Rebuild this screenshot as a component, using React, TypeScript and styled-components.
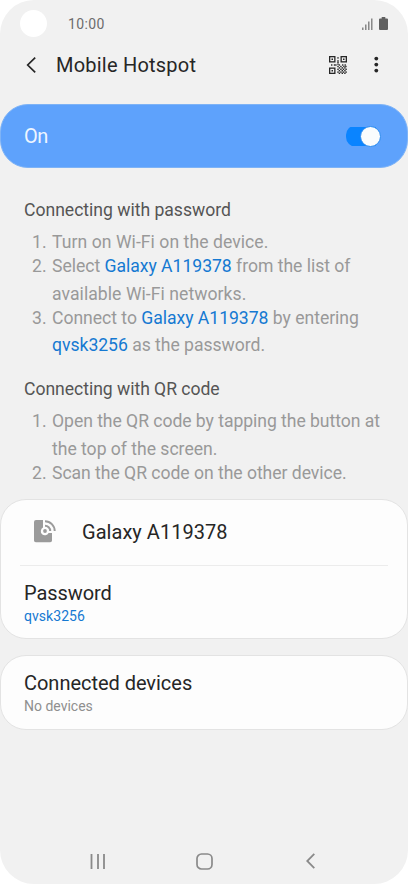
import React from 'react';
import styled, { createGlobalStyle } from 'styled-components';

const Global = createGlobalStyle`
  * { box-sizing: border-box; }
  body { margin: 0; background: #fff; font-family: Roboto, "Liberation Sans", sans-serif; }
`;
const Screen = styled.main`
  width: 408px; height: 884px; border-radius: 34px; background: #f1f1f1;
  display: flex; flex-direction: column; overflow: hidden;
`;
const StatusBar = styled.header`
  height: 47px; display: flex; align-items: center; padding: 0 20px 0 20px; flex: none;
`;
const Camera = styled.span`width: 27px; height: 27px; border-radius: 50%; background: #fff;`;
const Clock = styled.time`
  margin-left: 21px; margin-right: auto; font-size: 14px; line-height: 20px; letter-spacing: 0.4px; color: #6c6c6c;
`;
const StatusIcons = styled.div`display: flex; gap: 6px; align-items: center;`;
const TitleBar = styled.div`
  height: 36px; display: flex; align-items: center; padding: 0 23px 0 24px; flex: none;
`;
const Title = styled.h1<{ $track: number }>`
  margin: 0 auto 0 18px; font-size: 20px; line-height: 28px; font-weight: 400; color: #262626;
  letter-spacing: ${(p) => p.$track}px;
`;
const IconButton = styled.button`
  border: 0; padding: 0; background: none; color: #262626; display: flex; cursor: pointer;
  & + & { margin-left: 18px; }
`;
const SwitchBar = styled.section`
  flex: none; height: 64px; margin-top: 21px; border-radius: 28px; background: #5ea2fc; border: 1px solid #7eb3f6;
  display: flex; align-items: center; justify-content: space-between; padding: 0 26px 0 23px;
  color: #eef6ff; font-size: 20px; letter-spacing: -0.5px;
`;
const Track = styled.button`
  width: 35px; height: 22px; padding: 0; border: 0; display: flex; align-items: center; justify-content: flex-end;
  background: linear-gradient(#0a84ff, #0a84ff) no-repeat 0 50% / 30px 19px; border-radius: 10px; cursor: pointer;
`;
const Knob = styled.span`
  width: 21px; height: 21px; border-radius: 50%; background: #fafcfd; border: 1px solid #2e8df0;
`;
const Help = styled.section`flex: none; height: 331px; padding: 28px 0 0 24px;`;
const HelpTitle = styled.h2<{ $track: number }>`
  margin: 0; font-size: 17.6px; line-height: 28px; font-weight: 400; color: #555; letter-spacing: ${(p) => p.$track}px;
`;
const Steps = styled.ol`margin: 5px 0 15px; padding: 0; list-style: none;`;
const Step = styled.li`
  display: grid; grid-template-columns: 28px 1fr; line-height: 27.6px; font-size: 17.6px; color: #999;
  & + & { margin-top: -3.5px; }
`;
const Num = styled.span`padding-left: 8px;`;
const Line = styled.span<{ $track: number }>`
  display: block; white-space: nowrap; letter-spacing: ${(p) => p.$track}px;
`;
const Accent = styled.span`color: #1579d2;`;
const Card = styled.section<{ $height: number }>`
  flex: none; height: ${(p) => p.$height}px; border: 1px solid #e3e3e3; border-radius: 26px; background: #fdfdfd;
  & + & { margin-top: 16px; }
`;
const Network = styled.div`
  height: 66px; margin: 0 19px; padding: 0 0 2px 14px; border-bottom: 1px solid #ececec;
  display: flex; align-items: center; gap: 26px;
`;
const Entry = styled.div`padding: 13px 23px 0;`;
const Label = styled.div<{ $track: number }>`
  font-size: 20px; line-height: 28px; color: #262626; letter-spacing: ${(p) => p.$track}px;
`;
const Value = styled.div<{ $accent?: boolean; $track: number }>`
  font-size: 14px; line-height: 18px; color: ${(p) => (p.$accent ? '#1579d2' : '#8f8f8f')}; letter-spacing: ${(p) => p.$track}px;
`;
const NavBar = styled.nav`
  margin-top: auto; height: 46px; display: grid; grid-template-columns: repeat(3, 106.5px); justify-content: center; color: #8a8a8a; flex: none;
`;
const NavButton = styled.button`
  border: 0; padding: 0; background: none; color: inherit; display: flex; align-items: center; justify-content: center; cursor: pointer;
`;

const FINDERS = [[0, 0], [11.5, 0], [0, 11.5]];
const MODULES = [
  [8.3, 1.2], [8.3, 4.2], [8.3, 5.6],
  [2, 8.3], [4.8, 8.3], [6.2, 8.3], [8.3, 7.4], [9.7, 8.3], [13, 8.3], [15.5, 8.3],
  [8.3, 9.8], [11.2, 9.8], [14.2, 9.8], [16.2, 9.8],
  [9.7, 11.2], [12.6, 11.2], [15.2, 11.2],
  [8.3, 12.6], [11.2, 12.6], [13.8, 12.6], [16.4, 12.6],
  [9.7, 14], [12.6, 14], [15.2, 14],
  [8.3, 15.4], [11.2, 15.4], [13.8, 15.4], [16.4, 15.4],
  [9.7, 16.6], [12.6, 16.6], [15.2, 16.6],
];

const QrIcon = () => (
  <svg width="18" height="18" viewBox="0 0 18 18" fill="currentColor">
    {FINDERS.map(([x, y]) => (
      <g key={`${x}-${y}`}>
        <rect x={x + 0.65} y={y + 0.65} width="5.2" height="5.2" fill="none" stroke="currentColor" strokeWidth="1.3" />
        <rect x={x + 2.5} y={y + 2.5} width="1.5" height="1.5" />
      </g>
    ))}
    {MODULES.map(([x, y]) => <rect key={`${x}-${y}`} x={x} y={y} width="1.4" height="1.4" />)}
  </svg>
);
const HotspotIcon = () => (
  <svg width="22" height="23" viewBox="0 0 22 23" fill="none">
    <path d="M2 0H9V7.6A4.1 4.1 0 1 0 14.6 13H18V20.5A1.8 1.8 0 0 1 16.2 22.3H1.8A1.8 1.8 0 0 1 0 20.5V2A2 2 0 0 1 2 0Z" fill="#9b9b9b" />
    <circle cx="11" cy="11" r="1.9" fill="#9b9b9b" />
    <path d="M11 5.8A5.2 5.2 0 0 1 16.2 11M11 1.3A9.7 9.7 0 0 1 20.7 11" stroke="#9b9b9b" strokeWidth="2" />
  </svg>
);

export default function App() {
  return (
    <>
      <Global />
      <Screen>
        <StatusBar>
          <Camera />
          <Clock>10:00</Clock>
          <StatusIcons>
            <svg width="11" height="12" viewBox="0 0 11 12" stroke="#777" strokeWidth="1.3">
              <path d="M.8 9.5V12M3.8 6.5V12M6.8 3.5V12M9.8 .5V12" />
            </svg>
            <svg width="9" height="13" viewBox="0 0 9 13" fill="#606060">
              <path d="M2.7 0H6.3V1.5H8Q9 1.5 9 2.5V12Q9 13 8 13H1Q0 13 0 12V2.5Q0 1.5 1 1.5H2.7Z" />
            </svg>
          </StatusIcons>
        </StatusBar>
        <TitleBar>
          <IconButton aria-label="Back">
            <svg width="14" height="16" viewBox="0 0 14 16" fill="none" stroke="currentColor" strokeWidth="1.7"><path d="M11.2 .7L3.7 8L11.2 15.3" /></svg>
          </IconButton>
          <Title $track={0.22}>Mobile Hotspot</Title>
          <IconButton aria-label="QR code"><QrIcon /></IconButton>
          <IconButton aria-label="More options">
            <svg width="20" height="18" viewBox="0 0 20 18" fill="currentColor"><circle cx="11.3" cy="2.6" r="1.9" /><circle cx="11.3" cy="8.6" r="1.9" /><circle cx="11.3" cy="14.6" r="1.9" /></svg>
          </IconButton>
        </TitleBar>
        <SwitchBar>
          <span>On</span>
          <Track role="switch" aria-checked="true" aria-label="Mobile Hotspot"><Knob /></Track>
        </SwitchBar>
        <Help>
          <HelpTitle $track={-0.02}>Connecting with password</HelpTitle>
          <Steps>
            <Step><Num>1.</Num><Line $track={0.05}>Turn on Wi-Fi on the device.</Line></Step>
            <Step><Num>2.</Num><div>
              <Line $track={-0.03}>Select <Accent>Galaxy A119378</Accent> from the list of</Line>
              <Line $track={0.05}>available Wi-Fi networks.</Line>
            </div></Step>
            <Step><Num>3.</Num><div>
              <Line $track={-0.03}>Connect to <Accent>Galaxy A119378</Accent> by entering</Line>
              <Line $track={-0.03}><Accent>qvsk3256</Accent> as the password.</Line>
            </div></Step>
          </Steps>
          <HelpTitle $track={-0.04}>Connecting with QR code</HelpTitle>
          <Steps>
            <Step><Num>1.</Num><div>
              <Line $track={-0.05}>Open the QR code by tapping the button at</Line>
              <Line $track={-0.02}>the top of the screen.</Line>
            </div></Step>
            <Step><Num>2.</Num><Line $track={-0.04}>Scan the QR code on the other device.</Line></Step>
          </Steps>
        </Help>
        <Card $height={140}>
          <Network><HotspotIcon /><Label $track={0.04}>Galaxy A119378</Label></Network>
          <Entry>
            <Label $track={-0.08}>Password</Label>
            <Value $accent $track={0.05}>qvsk3256</Value>
          </Entry>
        </Card>
        <Card $height={75}>
          <Entry>
            <Label $track={-0.03}>Connected devices</Label>
            <Value $track={0}>No devices</Value>
          </Entry>
        </Card>
        <NavBar>
          <NavButton aria-label="Recent apps"><svg width="15" height="15" viewBox="0 0 15 15" stroke="currentColor" strokeWidth="1.8"><path d="M1.5 0V15M8 0V15M14 0V15" /></svg></NavButton>
          <NavButton aria-label="Home"><svg width="17" height="17" viewBox="0 0 17 17" fill="none" stroke="currentColor" strokeWidth="1.7"><rect x="1" y="1" width="15" height="15" rx="4.5" /></svg></NavButton>
          <NavButton aria-label="Back"><svg width="9" height="16" viewBox="0 0 9 16" fill="none" stroke="currentColor" strokeWidth="1.8"><path d="M8.3 .8L1.2 8L8.3 15.2" /></svg></NavButton>
        </NavBar>
      </Screen>
    </>
  );
}
